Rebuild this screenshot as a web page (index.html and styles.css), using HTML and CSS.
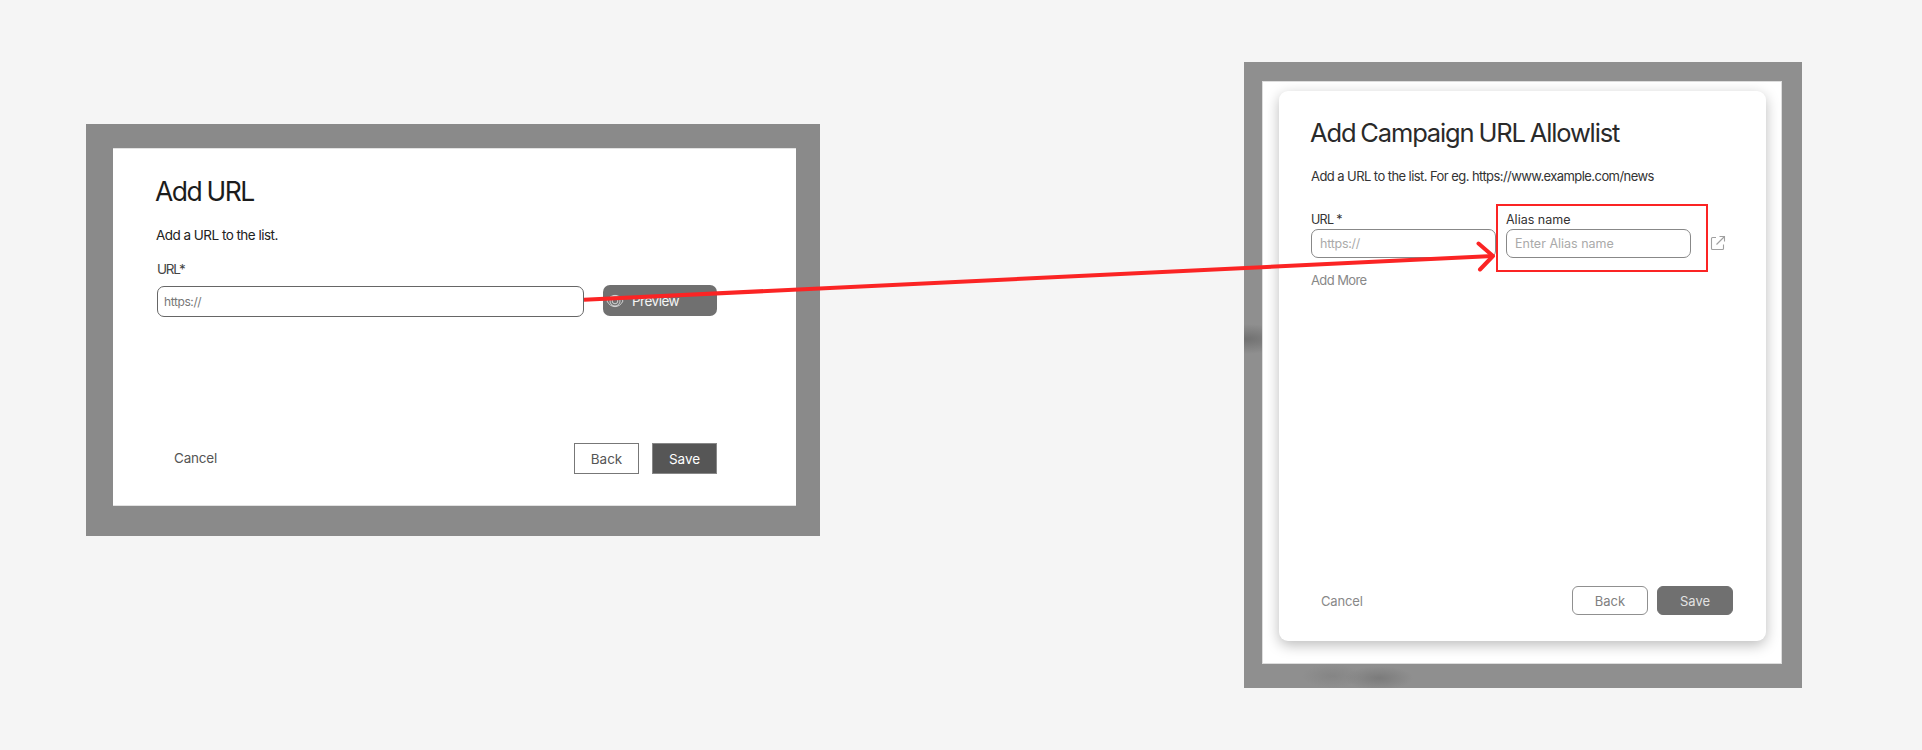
FILE: index.html
```html
<!DOCTYPE html>
<html lang="en">
<head>
<meta charset="utf-8">
<title>Add URL</title>
<link rel="stylesheet" href="styles.css">
</head>
<body>
<main class="board">
  <section class="frame frame-before">
    <div class="dialog">
      <h1 class="title"><span>Add URL</span></h1>
      <p class="lead"><span>Add a URL to the list.</span></p>
      <div class="label"><span>URL</span><span>*</span></div>
      <div class="row">
        <div class="input"><span>https://</span></div>
        <div class="preview">
          <svg class="eye" viewBox="0 0 18 14"><path d="M1 7C4.500-.5 13.500-.5 17 7C13.500 14.500 4.500 14.500 1 7Z"/><circle cx="9" cy="7" r="2.800"/><circle cx="9" cy="7" r="5"/></svg>
          <span>Preview</span>
        </div>
      </div>
      <div class="actions">
        <div class="cancel"><span>Cancel</span></div>
        <div class="button"><span>Back</span></div>
        <div class="button button-dark"><span>Save</span></div>
      </div>
    </div>
  </section>
  <section class="frame frame-after">
    <div class="backdrop">
      <div class="card">
        <h1 class="title"><span>Add Campaign URL Allowlist</span></h1>
        <p class="lead"><span>Add a URL to the list. For eg. https://www.example.com/news</span></p>
        <div class="row">
          <div class="field"><div class="label"><span>URL *</span></div><div class="input"><span>https://</span></div></div>
          <div class="field"><div class="label label-alias"><span>Alias name</span></div><div class="input input-alias"><span>Enter Alias name</span></div></div>
          <svg class="open" viewBox="0 0 16 16"><path d="M6 2.500H2.500Q1.500 2.500 1.500 3.500V13.500Q1.500 14.500 2.500 14.500H12.500Q13.500 14.500 13.500 13.500V9.500M6.500 9.500L14.500 1.500M9.500 1.500H14.500V6.500"/></svg>
        </div>
        <div class="more"><span>Add More</span></div>
        <div class="actions">
          <div class="cancel"><span>Cancel</span></div>
          <div class="button"><span>Back</span></div>
          <div class="button button-dark"><span>Save</span></div>
        </div>
      </div>
    </div>
  </section>
  <svg class="annotation" viewBox="0 0 1922 750">
    <rect x="1497" y="205" width="210" height="66" stroke-width="2"/>
    <path stroke-width="4" d="M584 299.800L1493 256"/>
    <path stroke-width="4" stroke-linecap="round" stroke-linejoin="round" d="M1478.500 243.500L1493 256L1480 269.500"/>
  </svg>
</main>
</body>
</html>
```

FILE: styles.css
```css
* { box-sizing: border-box; }
body { margin: 0; background: #f5f5f5; font-family: Inter, "Liberation Sans", sans-serif; color: #222; }
.board { position: relative; display: flex; width: 1922px; height: 750px; overflow: hidden; align-items: flex-start; }
.title, .lead { margin: 0; font-weight: 400; }
span { white-space: nowrap; }
.input, .button, .preview { display: flex; align-items: center; }
.button { justify-content: center; flex: none; }
.cancel { flex: none; }
.row, .actions { display: flex; }

.frame-before { width: 734px; height: 412px; margin: 124px 0 0 86px; padding: 24px 24px 30px 27px; background: #8a8a8a; }
.frame-before .dialog { height: 358px; padding: 26px 79px 0 43px; background: #fff; border: solid #e2e2e2; border-width: 1px 0; }
.frame-before .title { font-size: 26.5px; line-height: 32px; height: 32px; margin-left: -1px; color: #1c1c1c; letter-spacing: -1.45px; word-spacing: -1px; }
.frame-before .lead { font-size: 13.5px; line-height: 20px; margin-top: 18px; letter-spacing: -.53px; }
.frame-before .label { font-size: 13.5px; line-height: 20px; margin: 14px 0 0 1px; color: #444; letter-spacing: -1.3px; }
.frame-before .row { margin: 7px 0 0 1px; gap: 19px; }
.frame-before .input { width: 427px; height: 31px; padding-left: 6px; font-size: 12px; color: #777; letter-spacing: -.4px; border: 1px solid #666; border-radius: 7px; }
.preview { width: 114px; height: 31px; flex: none; margin-top: -1px; padding-left: 3px; gap: 8px; font-size: 13.5px; letter-spacing: -.5px; color: #f4f4f4; background: #707070; border-radius: 7px; }
.eye { width: 18px; height: 14px; fill: none; stroke: #ddd; stroke-width: .9; }
.frame-before .actions { margin-top: 126px; }
.frame-before .cancel { width: 418px; padding-left: 18px; line-height: 31px; font-size: 13.5px; letter-spacing: -.2px; color: #555; }
.frame-before .button { width: 65px; height: 31px; font-size: 13.5px; color: #555; border: 1px solid #777; }
.frame-before .button-dark { margin-left: 13px; color: #fff; background: #565656; border-color: #888; }

.frame-after { width: 558px; height: 626px; margin: 62px 0 0 424px; padding: 19px 20px 24px 18px; background: radial-gradient(ellipse 50px 15px at 0 277px, #707070, transparent), radial-gradient(ellipse 34px 12px at 135px 616px, #7b7b7b, transparent), radial-gradient(ellipse 30px 12px at 88px 614px, #858585, transparent), #8f8f8f; }
.backdrop { width: 520px; height: 583px; padding: 10px 16px 23px; background: #fff; border: 1px solid #ddd; overflow: hidden; }
.card { width: 487px; height: 550px; margin-top: -1px; padding: 26px 0 0 32px; background: #fff; border-radius: 9px; box-shadow: 0 4px 14px rgba(0,0,0,.27); }
.card .title { font-size: 25.5px; line-height: 32px; height: 32px; margin-left: -1px; color: #2a2a2a; letter-spacing: -1.16px; word-spacing: -1px; }
.card .lead { font-size: 13px; line-height: 20px; margin-top: 17px; color: #333; letter-spacing: -.57px; }
.card .row { margin-top: 23px; gap: 10px; }
.card .label { font-size: 12.5px; line-height: 22px; height: 20px; color: #333; letter-spacing: -.7px; }
.card .label-alias { letter-spacing: 0; }
.card .input { width: 185px; height: 29px; padding-left: 8px; font-size: 12.5px; letter-spacing: -.25px; color: #aaa; border: 1px solid #888; border-radius: 7px; }
.card .input-alias { letter-spacing: 0; }
.open { width: 16px; height: 16px; margin: 26px 0 0 9px; fill: none; stroke: #a0a0a0; stroke-width: 1.1; }
.more { margin-top: 11px; font-size: 13px; line-height: 22px; height: 20px; letter-spacing: -.6px; color: #888; }
.card .actions { margin-top: 297px; }
.card .cancel { width: 261px; padding-left: 10px; line-height: 30px; height: 29px; font-size: 13px; letter-spacing: -.15px; color: #888; }
.card .button { width: 76px; height: 29px; font-size: 13px; color: #808080; border: 1px solid #909090; border-radius: 6px; }
.card .button-dark { margin-left: 9px; color: #e2e2e2; background: #707070; border-color: #707070; }
.annotation { position: absolute; left: 0; top: 0; width: 1922px; height: 750px; fill: none; stroke: #fb2424; }
```
